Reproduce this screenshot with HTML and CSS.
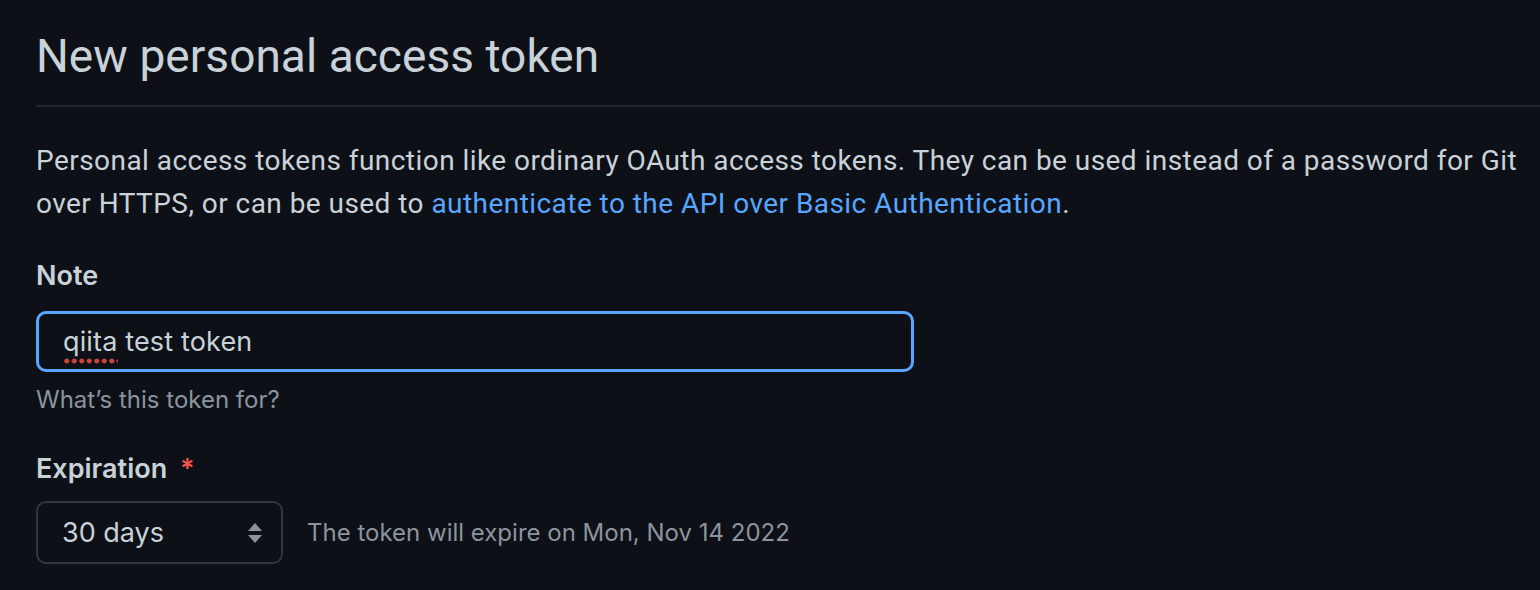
FILE: index.html
```html
<!DOCTYPE html>
<html lang="en">
<head>
<meta charset="utf-8">
<title>New personal access token</title>
<link rel="stylesheet" href="styles.css">
</head>
<body>
<main class="page">
  <div class="subhead">
    <h2 class="subhead-heading">New personal access token</h2>
  </div>
  <p class="intro">Personal access tokens function like ordinary OAuth access tokens. They can be used instead of a password for Git over HTTPS, or can be used to <a href="#" class="link">authenticate to the API over Basic Authentication</a>.</p>

  <div class="form-group">
    <label class="form-label" for="note">Note</label>
    <div class="input-wrap">
      <div class="input focused" id="note"><span class="misspelled">qiita</span> test token</div>
    </div>
    <p class="note">What’s this token for?</p>
  </div>

  <div class="form-group expiration">
    <label class="form-label">Expiration <span class="required">*</span></label>
    <div class="select-row">
      <div class="select">
        <span>30 days</span>
        <svg class="select-arrows" width="16" height="22" viewBox="0 0 16 22" aria-hidden="true">
          <path d="M8 1 L15 9 L1 9 Z" fill="#8b949e"/>
          <path d="M1 13 L15 13 L8 21 Z" fill="#8b949e"/>
        </svg>
      </div>
      <span class="expire-note">The token will expire on Mon, Nov 14 2022</span>
    </div>
  </div>
</main>
</body>
</html>
```

FILE: styles.css
```css
html, body {
  margin: 0;
  padding: 0;
  background: #0d1117;
  overflow: hidden;
}

.page {
  padding-left: 36px;
  color: #c9d1d9;
  font-family: Roboto, "Liberation Sans", sans-serif;
}

.subhead {
  padding-top: 26px;
  padding-bottom: 19px;
  border-bottom: 2px solid #21262d;
}

.subhead-heading {
  margin: 0;
  font-size: 46px;
  font-weight: 400;
  letter-spacing: 0.05px;
  line-height: 60px;
  color: #c9d1d9;
}

.intro {
  margin: 32px 0 0;
  font-size: 28px;
  letter-spacing: 0.45px;
  line-height: 43px;
  color: #c9d1d9;
  padding-right: 10px;
}

.link {
  color: #58a6ff;
  text-decoration: none;
}

.form-group {
  margin-top: 33px;
  font-family: Inter, "Noto Sans", sans-serif;
}

.form-label {
  display: block;
  font-size: 27px;
  font-weight: 600;
  line-height: 36px;
  color: #c9d1d9;
}

.input-wrap {
  margin-top: 17px;
  width: 878px;
}

.input {
  box-sizing: border-box;
  height: 61px;
  padding: 0 24px;
  border: 3px solid #58a6ff;
  border-radius: 10px;
  font-size: 27px;
  letter-spacing: 0.15px;
  line-height: 55px;
  color: #c9d1d9;
  background: #0d1117;
  white-space: pre;
}

.misspelled {
  padding-bottom: 6px;
  background-image: radial-gradient(circle, #d2443a 2.2px, transparent 2.8px);
  background-size: 7.5px 6px;
  background-repeat: repeat-x;
  background-position: 0 100%;
}

.note {
  margin: 12px 0 0;
  font-size: 24px;
  line-height: 32px;
  color: #8b949e;
}

.expiration {
  margin-top: 35px;
}

.required {
  color: #f85149;
  margin-left: 6px;
}

.select-row {
  margin-top: 14px;
  display: flex;
  align-items: center;
  gap: 24px;
}

.select {
  box-sizing: border-box;
  width: 247px;
  height: 63px;
  padding: 0 18px 0 24px;
  border: 2px solid #30363d;
  border-radius: 10px;
  display: flex;
  align-items: center;
  justify-content: space-between;
  font-size: 27px;
  color: #c9d1d9;
}

.expire-note {
  font-size: 24px;
  color: #8b949e;
}
```
